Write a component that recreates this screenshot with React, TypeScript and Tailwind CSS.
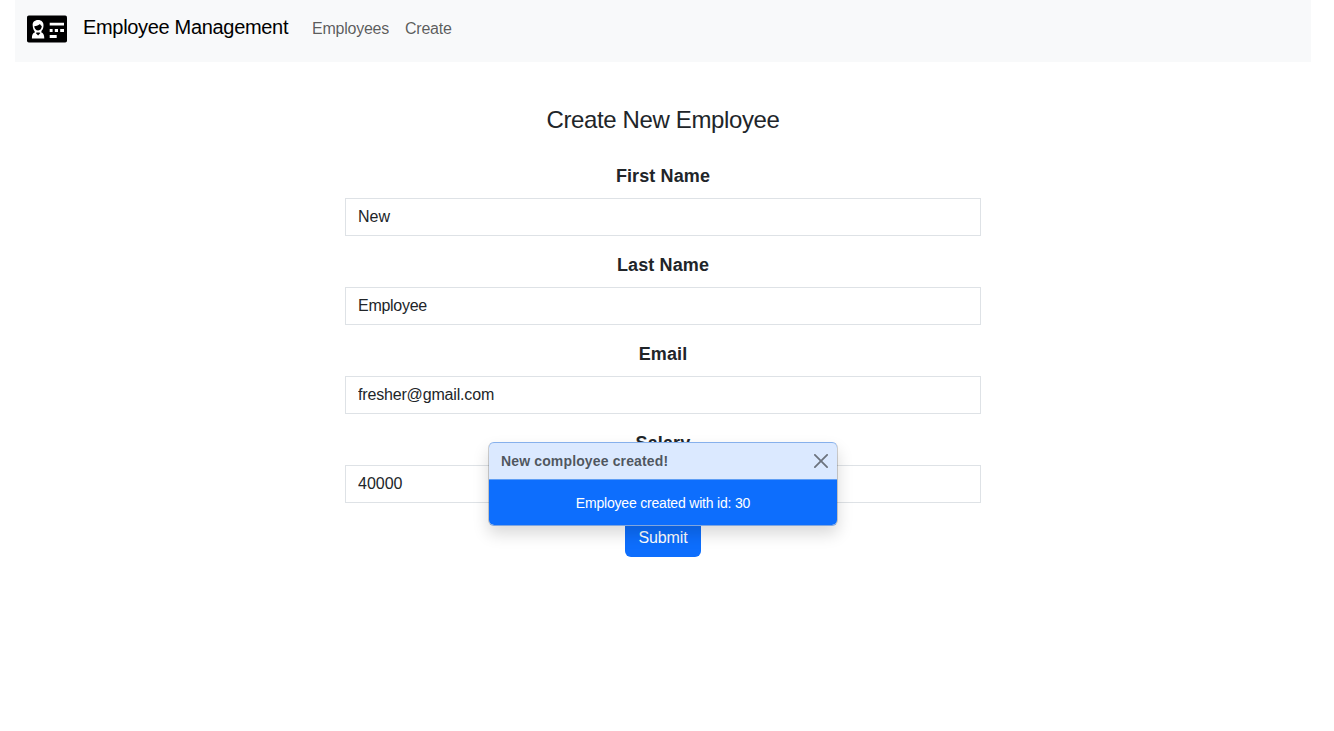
import React from "react";

const fields = [
  { id: "firstName", label: "First Name", value: "New", tracking: "tracking-normal" },
  { id: "lastName", label: "Last Name", value: "Employee", tracking: "tracking-[-0.27px]" },
  { id: "email", label: "Email", value: "fresher@gmail.com", tracking: "tracking-[-0.17px]" },
  { id: "salary", label: "Salary", value: "40000", tracking: "tracking-normal" },
];

function IdCardLogo() {
  return (
    <svg width="40" height="28" viewBox="0 0 40 28" className="block shrink-0">
      <rect x="0" y="0.5" width="40" height="27" rx="1.8" fill="#000" />
      <path
        d="M11.2 5C7.4 5 5.4 7.4 5.7 10.4C5.9 13 6.4 14.6 7.4 16L8 17.2C5.8 18 4.9 19.6 4.9 23.4H17.3C17.3 19.6 16.2 18 14.2 17.2L14.7 15.6C15.9 14.4 16.5 12.8 16.5 10.2C16.5 7.2 14.4 5 11.2 5Z"
        fill="#fff"
      />
      <path d="M7.2 11.2C9.6 11.2 11.8 10 13 8.9C13.5 10 14 10.6 14.8 11C14.6 13.8 13.4 15.4 11.2 15.4C9 15.4 7.5 13.6 7.2 11.2Z" fill="#000" />
      <path d="M8.8 18L11.1 20.4L13.4 18L12.4 17.6H9.8Z" fill="#000" />
      <path d="M22.7 7.8H37V10.4H22.7Z M22.7 14H25.6V17H22.7Z M27.8 14H31V17H27.8Z M33.2 14H37V17H33.2Z M22.7 20.1H29.7V22.9H22.7Z" fill="#fff" />
    </svg>
  );
}

function Navbar() {
  return (
    <nav className="flex h-[62px] items-start bg-[#f8f9fa] px-3">
      <a href="#" className="flex w-[285px] text-xl leading-[30px] text-black">
        <span className="mr-4 pt-[15px]"><IdCardLogo /></span>
        <span className="pt-[12px] tracking-[-0.32px] whitespace-nowrap">Employee Management</span>
      </a>
      <div className="flex pt-[17px] text-base leading-6 tracking-[-0.24px] text-black/65">
        <a href="#" className="w-[93px]">Employees</a>
        <a href="#">Create</a>
      </div>
    </nav>
  );
}

function Toast() {
  return (
    <div
      role="alert"
      className="absolute top-[442px] left-[488px] h-[84px] w-[350px] rounded-md border border-black/[0.175] border-t-[#86b0ec] border-b-[#7fa6df] bg-[#0d6efd] bg-clip-padding text-sm leading-[21px] shadow-[0_8px_16px_rgba(0,0,0,0.15)]"
    >
      <div className="flex h-[37px] items-center rounded-t-[5px] border-b border-[#5f9ef5] bg-white/85 bg-clip-padding px-3">
        <strong className="mr-auto font-bold tracking-[0.14px] text-[#212529]/75">New comployee created!</strong>
        <button aria-label="Close" className="-mr-[3px] opacity-50">
          <svg width="14" height="14" viewBox="0 0 16 16" fill="#000">
            <path d="M.293.293a1 1 0 0 1 1.414 0L8 6.586 14.293.293a1 1 0 1 1 1.414 1.414L9.414 8l6.293 6.293a1 1 0 0 1-1.414 1.414L8 9.414l-6.293 6.293a1 1 0 0 1-1.414-1.414L6.586 8 .293 1.707a1 1 0 0 1 0-1.414z" />
          </svg>
        </button>
      </div>
      <div className="px-3 pt-[13px] text-center tracking-[-0.19px] text-white">Employee created with id: 30</div>
    </div>
  );
}

export default function App() {
  return (
    <div className="relative h-[731px] overflow-hidden bg-white pr-[23px] pl-[15px] font-['Liberation_Sans',Arial,sans-serif] text-[#212529]">
      <Navbar />
      <main className="mx-auto flex w-[636px] flex-col items-center pt-[43px]">
        <h4 className="text-2xl leading-[29px] tracking-[-0.38px]">Create New Employee</h4>
        <form className="mt-7 flex w-full flex-col items-center">
          {fields.map((field) => (
            <div key={field.id} className="mb-[15px] flex w-full flex-col items-center">
              <label htmlFor={field.id} className="mb-2 text-lg leading-7 font-bold tracking-[0.12px]">
                {field.label}
              </label>
              <input
                id={field.id}
                defaultValue={field.value}
                className={`h-[38px] w-full border border-[#dee2e6] bg-white px-3 text-base leading-6 outline-none ${field.tracking}`}
              />
            </div>
          ))}
          <button type="button" className="mt-px h-[38px] w-[76px] rounded-md bg-[#0d6efd] text-base leading-6 tracking-[-0.1px] text-white">
            Submit
          </button>
        </form>
      </main>
      <Toast />
    </div>
  );
}
